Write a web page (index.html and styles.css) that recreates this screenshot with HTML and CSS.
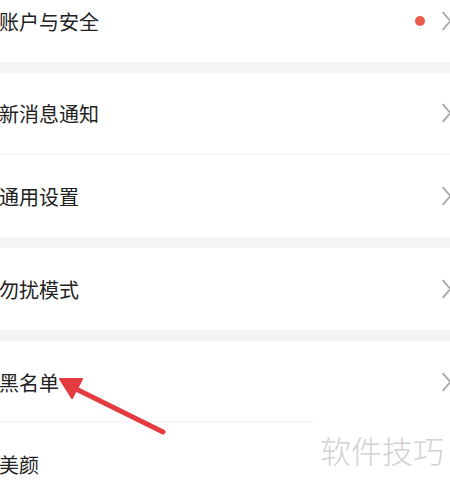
FILE: index.html
```html
<!DOCTYPE html>
<html lang="zh-CN">
<head>
    <meta charset="UTF-8">
    <meta name="viewport" content="width=device-width, initial-scale=1.0">
    <title>设置</title>
    <link rel="stylesheet" href="styles.css">
</head>
<body>
    <div class="settings">
        <div class="group first">
            <div class="row">
                <span class="label">账户与安全</span>
                <span class="extra">
                    <span class="dot"></span>
                    <svg class="chevron" viewBox="0 0 10 20"><path d="M1.5 2 L8.5 10 L1.5 18"/></svg>
                </span>
            </div>
        </div>

        <div class="group">
            <div class="row">
                <span class="label">新消息通知</span>
                <svg class="chevron" viewBox="0 0 10 20"><path d="M1.5 2 L8.5 10 L1.5 18"/></svg>
            </div>
            <div class="row">
                <span class="label">通用设置</span>
                <svg class="chevron" viewBox="0 0 10 20"><path d="M1.5 2 L8.5 10 L1.5 18"/></svg>
            </div>
        </div>

        <div class="group">
            <div class="row">
                <span class="label">勿扰模式</span>
                <svg class="chevron" viewBox="0 0 10 20"><path d="M1.5 2 L8.5 10 L1.5 18"/></svg>
            </div>
        </div>

        <div class="group">
            <div class="row short-line">
                <span class="label">黑名单</span>
                <svg class="chevron" viewBox="0 0 10 20"><path d="M1.5 2 L8.5 10 L1.5 18"/></svg>
            </div>
            <div class="row">
                <span class="label">美颜</span>
            </div>
        </div>
    </div>

    <!-- annotation arrow drawn over the screenshot -->
    <svg class="arrow" width="450" height="486" viewBox="0 0 450 486">
        <line x1="163" y1="432" x2="72" y2="387" />
        <polygon points="60,379 82,379 72,398" />
    </svg>

    <div class="watermark">软件技巧</div>
</body>
</html>
```

FILE: styles.css
```css
body {
    margin: 0;
    width: 450px;
    height: 486px;
    overflow: hidden;
    position: relative;
    background-color: #f4f4f4;
    font-family: "Noto Sans CJK SC", "Noto Sans", sans-serif;
}

.settings {
    display: flex;
    flex-direction: column;
    gap: 11px;
}

.group {
    background-color: #fff;
}

.group.first {
    margin-top: -20px;
}

.row {
    height: 82px;
    display: flex;
    align-items: center;
    justify-content: space-between;
    border-bottom: 2px solid #f7f7f7;
    box-sizing: border-box;
}

.row:last-child {
    border-bottom: none;
}

.row.short-line {
    border-bottom: none;
    background-image: linear-gradient(#f6f6f6, #f6f6f6);
    background-size: 313px 2px;
    background-position: 0 100%;
    background-repeat: no-repeat;
}

.label {
    font-size: 20px;
    color: #222;
    margin-left: -1px;
}

.extra {
    display: flex;
    align-items: center;
    gap: 16px;
}

.dot {
    width: 10px;
    height: 10px;
    border-radius: 50%;
    background-color: #ea5d4a;
}

.chevron {
    width: 11px;
    height: 22px;
    margin-right: -2px;
    fill: none;
    stroke: #a6a6a6;
    stroke-width: 1.6;
}

.arrow {
    position: absolute;
    left: 0;
    top: 0;
}

.arrow line {
    stroke: #e33b3f;
    stroke-width: 5;
    stroke-linecap: round;
}

.arrow polygon {
    fill: #e33b3f;
    stroke: #e33b3f;
    stroke-width: 2;
    stroke-linejoin: round;
}

.watermark {
    position: absolute;
    left: 313px;
    top: 428px;
    width: 137px;
    height: 58px;
    padding-left: 7px;
    box-sizing: border-box;
    background-color: #fff;
    font-size: 31px;
    font-weight: 300;
    color: #d2d2d2;
    line-height: 44px;
}
```
